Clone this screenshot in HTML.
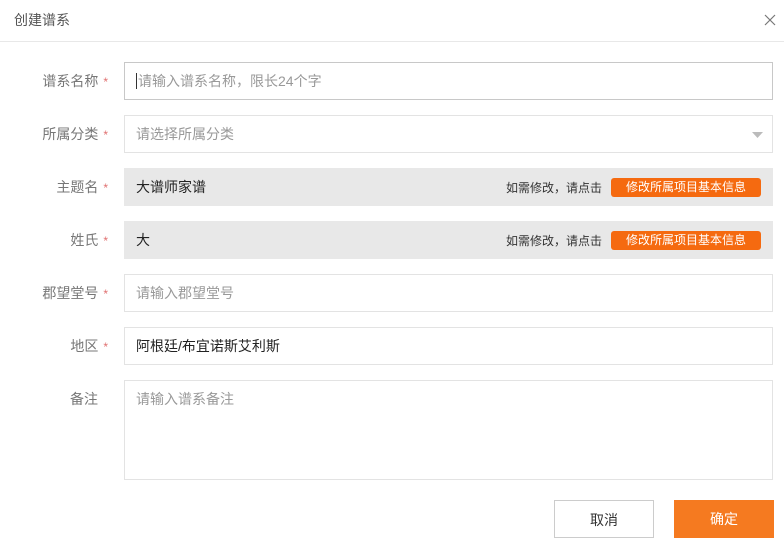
<!DOCTYPE html>
<html><head><meta charset="utf-8"><style>
*{margin:0;padding:0;box-sizing:border-box}
body{width:784px;height:544px;background:#fff;font-family:"Liberation Sans","Noto Sans CJK SC",sans-serif;position:relative;overflow:hidden;color:#333}
.title{position:absolute;left:14px;top:10px;font-size:14px;color:#555}
.close{position:absolute;left:764px;top:14px}
.hr{position:absolute;left:0;top:41px;width:784px;height:1px;background:#e8e8e8}
.lbl{position:absolute;right:676px;font-size:14px;color:#777;text-align:right;white-space:nowrap}
.lbl i{font-style:normal;color:#e07070;font-size:12px;margin-left:5px}
.box{position:absolute;left:124px;width:649px;border:1px solid #e3e3e3;font-size:14px;color:#999;padding-left:11px;display:flex;align-items:center}
.grey{background:#e8e8e8;border-color:#e8e8e8;color:#222}
.hint{position:absolute;right:170px;font-size:12px;color:#333}
.btn{position:absolute;right:11px;width:150px;height:19px;background:#f56a10;border-radius:3px;color:#fff;font-size:12px;text-align:center;line-height:19px}
.b{position:absolute;top:500px;height:38px;font-size:14px;text-align:center;line-height:38px}
</style></head><body>
<div class="title">创建谱系</div>
<svg class="close" width="12" height="12" viewBox="0 0 12 12"><path d="M1 1L11 11M11 1L1 11" stroke="#777" stroke-width="1.2"/></svg>
<div class="hr"></div>

<div class="lbl" style="top:71px">谱系名称<i>*</i></div>
<div class="box" style="top:62px;height:38px;border-color:#c8c8c8"><span style="border-left:1px solid #333;height:16px;margin-right:1px"></span>请输入谱系名称，限长24个字</div>

<div class="lbl" style="top:124px">所属分类<i>*</i></div>
<div class="box" style="top:115px;height:38px">请选择所属分类<svg style="position:absolute;right:9px;top:16px" width="11" height="6"><path d="M0 0H11L5.5 6Z" fill="#bbb"/></svg></div>

<div class="lbl" style="top:177px">主题名<i>*</i></div>
<div class="box grey" style="top:168px;height:38px">大谱师家谱<span class="hint">如需修改，请点击</span><span class="btn">修改所属项目基本信息</span></div>

<div class="lbl" style="top:230px">姓氏<i>*</i></div>
<div class="box grey" style="top:221px;height:38px">大<span class="hint">如需修改，请点击</span><span class="btn">修改所属项目基本信息</span></div>

<div class="lbl" style="top:283px">郡望堂号<i>*</i></div>
<div class="box" style="top:274px;height:38px">请输入郡望堂号</div>

<div class="lbl" style="top:336px">地区<i>*</i></div>
<div class="box" style="top:327px;height:38px;color:#222">阿根廷/布宜诺斯艾利斯</div>

<div class="lbl" style="top:389px;right:686px">备注</div>
<div class="box" style="top:380px;height:100px;align-items:flex-start;padding-top:8px">请输入谱系备注</div>

<div class="b" style="left:554px;width:100px;border:1px solid #ccc;color:#333">取消</div>
<div class="b" style="left:674px;width:100px;background:#f57a20;color:#fff">确定</div>
</body></html>
